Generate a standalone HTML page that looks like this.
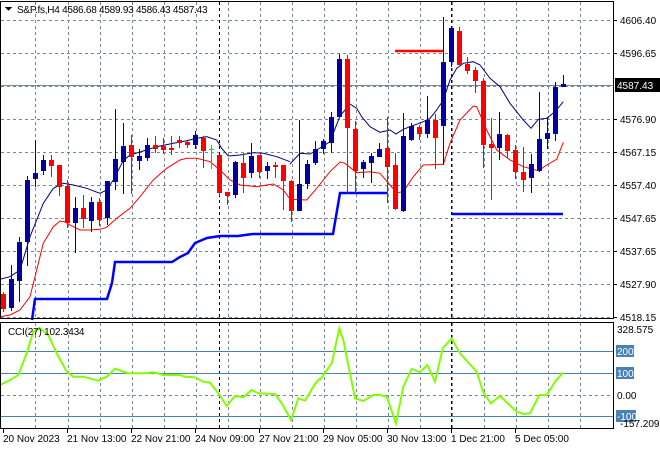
<!DOCTYPE html>
<html><head><meta charset="utf-8">
<style>
html,body{margin:0;padding:0;background:#fff;width:660px;height:450px;overflow:hidden}
svg{display:block}
text{font-family:"Liberation Sans",sans-serif;font-size:10px;fill:#000}
</style></head>
<body>
<svg id="s" width="660" height="450" viewBox="0 0 660 450" xmlns="http://www.w3.org/2000/svg" shape-rendering="crispEdges">
<g id="grid" stroke="#778899" stroke-width="1" stroke-dasharray="3,3" fill="none"></g>
<line x1="219.5" y1="2" x2="219.5" y2="318" stroke="#000" stroke-dasharray="3,3"/>
<line x1="451.5" y1="2" x2="451.5" y2="318" stroke="#000" stroke-dasharray="3,3"/>
<line x1="219.5" y1="323" x2="219.5" y2="428" stroke="#000" stroke-dasharray="3,3"/>
<line x1="451.5" y1="323" x2="451.5" y2="428" stroke="#000" stroke-dasharray="3,3"/>
<g stroke="#4682b4" stroke-width="1">
<line x1="1" y1="351.5" x2="613" y2="351.5"/>
<line x1="1" y1="373.5" x2="613" y2="373.5"/>
<line x1="1" y1="416.5" x2="613" y2="416.5"/>
</g>
<line x1="1" y1="85.5" x2="613" y2="85.5" stroke="#778899"/>
<g id="ind" fill="none" shape-rendering="auto"></g>
<g id="cdl"></g>
<rect x="0.5" y="1.5" width="613" height="317" fill="none" stroke="#000"/>
<rect x="0.5" y="322.5" width="613" height="106" fill="none" stroke="#000"/>
<polygon points="5,7 12,7 8.5,11" fill="#000"/>
<text x="17" y="13" style="letter-spacing:-0.25px">S&amp;P.fs,H4  4586.68 4589.93 4586.43 4587.43</text>
<text x="8" y="335" style="letter-spacing:-0.2px">CCI(27) 102.3434</text>
<g id="pax"></g>
<rect x="615" y="78" width="45" height="14" fill="#000"/>
<text x="617" y="89" style="fill:#fff">4587.43</text>
<text x="617" y="333">328.575</text>
<rect x="616" y="345" width="18" height="12" fill="#4682b4"/><text x="617" y="355" style="fill:#fff">200</text>
<rect x="616" y="367" width="18" height="12" fill="#4682b4"/><text x="617" y="377" style="fill:#fff">100</text>
<text x="617" y="399">0.00</text>
<rect x="616" y="410" width="20" height="12" fill="#4682b4"/><text x="617" y="420" style="fill:#fff">-100</text>
<text x="620" y="427">-157.2095</text>
<g id="tax"></g>
</svg>
<script>
var NS="http://www.w3.org/2000/svg";
function el(p,t,a){var e=document.createElementNS(NS,t);for(var k in a)e.setAttribute(k,a[k]);p.appendChild(e);return e;}
var g=document.getElementById('grid');
var vx=[35,68,100,132,164,196,228,260,292,324,356,388,420,452,484,516,548,580];
vx.forEach(function(x){el(g,'line',{x1:x+.5,y1:2,x2:x+.5,y2:318});el(g,'line',{x1:x+.5,y1:323,x2:x+.5,y2:428});});
var hy=[20,53,86,119,152,185,218,251,284,317];
hy.forEach(function(y){el(g,'line',{x1:1,y1:y+.5,x2:613,y2:y+.5});});
el(g,'line',{x1:1,y1:395.5,x2:613,y2:395.5});
var pax=document.getElementById('pax');
var pl=["4606.40","4596.65","4587.43","4576.90","4567.15","4557.40","4547.65","4537.65","4527.90","4518.15"];
var py=[20,53,0,119,152,185,218,251,284,317];
pl.forEach(function(t,i){if(!py[i])return;el(pax,'line',{x1:613,y1:py[i]+.5,x2:617,y2:py[i]+.5,stroke:'#000'});var e=el(pax,'text',{x:620,y:py[i]+4});e.textContent=t;});
var tax=document.getElementById('tax');
[["20 Nov 2023",3],["21 Nov 13:00",67],["22 Nov 21:00",131],["24 Nov 09:00",195],["27 Nov 21:00",259],["29 Nov 05:00",323],["30 Nov 13:00",387],["1 Dec 21:00",451],["5 Dec 05:00",515]].forEach(function(a){
el(tax,'line',{x1:a[1]+.5,y1:429,x2:a[1]+.5,y2:433,stroke:'#000'});var e=el(tax,'text',{x:a[1],y:442});e.textContent=a[0];});
var C=[
['r',294,309,292,312],['b',279,308,265,311],['b',242,281,237,302],['b',180,242,176,266],['b',173,179,140,187],
['b',160,171,155,175],['r',160,166,155,177],['r',165,187,165,196],['r',186,223,180,228],['b',208,223,197,253],
['r',208,219,195,228],['b',202,221,197,232],['r',202,220,198,226],['b',181,218,181,225],['b',159,182,109,190],
['b',146,162,123,194],['r',145,157,135,194],['b',156,161,149,170],['b',145,158,138,161],['r',145,149,136,153],
['r',146,150,138,154],['r',148,150,136,155],['r',140,143,136,148],['r',142,145,141,148],['b',135,145,131,149],
['r',138,151,136,168],['g',149,149,145,169],['r',155,193,155,196],['r',192,196,192,205],['b',162,195,161,198],
['r',163,178,153,193],['b',156,173,143,178],['r',155,172,155,178],['b',166,171,162,179],['r',165,167,162,178],
['r',165,181,165,210],['r',181,211,180,222],['b',184,211,120,211],['b',164,184,160,189],['b',149,163,141,165],
['b',141,149,139,154],['b',117,143,112,153],['b',59,117,54,117],['r',59,128,55,193],['r',129,171,121,193],
['b',162,169,160,178],['b',156,163,153,183],['b',149,157,143,157],['r',148,167,117,203],['r',165,209,153,210],
['b',136,211,113,212],['b',126,140,123,141],['r',127,134,125,140],['b',120,134,96,138],['r',120,138,114,169],
['b',62,126,17,165],['b',28,62,27,67],['r',31,65,27,65],['r',64,71,57,74],['r',70,81,67,93],
['r',81,145,78,168],['r',144,148,118,200],['b',134,148,112,160],['r',135,151,134,158],['r',150,172,145,179],
['r',172,180,147,192],['b',164,178,154,193],['b',139,171,92,172],['b',133,139,117,149],['b',87,134,82,141],
['b',84,87,75,87]];
var cg=document.getElementById('cdl');
var col={r:'#ff0000',b:'#0000a0',g:'#00dd00'};
C.forEach(function(c,i){var x=3+8*i;var f=col[c[0]];
el(cg,'rect',{x:x,y:c[3],width:1,height:Math.max(1,c[4]-c[3]),fill:f});
var h=Math.max(1,c[2]-c[1]);
if(c[0]=='g')el(cg,'rect',{x:x-2,y:c[1],width:5,height:1,fill:f});
else el(cg,'rect',{x:x-2,y:c[1],width:5,height:h,fill:f});});
var ind=document.getElementById('ind');
function poly(pts,ox,oy,stroke,w){var s=pts.map(function(p){return (ox+p[0]/3).toFixed(1)+','+(oy+p[1]/3).toFixed(1)}).join(' ');el(ind,'polyline',{points:s,stroke:stroke,'stroke-width':w,fill:'none'});}
poly([[0,568],[30,560],[60,540],[90,440],[130,340],[160,295],[190,280],[220,285],[260,295],[300,310],[320,300],[340,270],[370,212],[390,195],[430,183],[470,170],[520,160],[560,152],[590,145],[620,140],[650,150],[665,175],[685,198],[720,195],[760,188],[790,190],[830,200],[870,215]],0,90,'#000080',1);
poly([[0,462],[30,430],[60,432],[100,408],[120,395],[150,318],[180,282],[200,295],[215,320],[240,350],[270,367],[300,360],[318,372],[340,358],[360,350],[400,335],[420,325],[440,300],[460,270],[480,210],[500,175],[520,160],[550,155],[570,165],[600,205],[630,230],[660,280],[700,330],[723,355],[745,328],[770,325],[795,305],[820,275]],290,10,'#000080',1);
poly([[0,680],[30,675],[60,660],[90,620],[110,540],[130,460],[160,410],[180,393],[195,395],[210,405],[240,420],[270,420],[300,418],[320,412],[350,385],[390,355],[420,320],[460,270],[500,235],[540,210],[560,205],[590,205],[630,215],[660,240],[690,270],[720,285],[770,290],[800,285],[820,282],[850,300],[870,327]],0,90,'#ff0000',1);
poly([[0,568],[50,570],[80,535],[120,485],[150,456],[165,460],[200,488],[240,485],[270,490],[300,525],[320,548],[340,545],[370,500],[400,465],[460,463],[480,400],[510,330],[550,288],[560,290],[590,360],[620,420],[660,450],[700,470],[745,482],[770,465],[800,448],[820,397]],290,10,'#ff0000',1);
el(ind,'polyline',{points:'32,320 35,299 107,299 112,283 115,262 172,262 180,257 188,253 195,243 207,238 220,236 238,236 245,235 253,234 333,234 340,193 387,193',stroke:'#0000ff','stroke-width':2.5,fill:'none'});
el(ind,'line',{x1:395,y1:51,x2:443,y2:51,stroke:'#ff0000','stroke-width':2.5});
el(ind,'line',{x1:452,y1:214,x2:563,y2:214,stroke:'#0000ff','stroke-width':2.5});
poly([[0,225],[30,210],[55,195],[80,130],[100,65],[120,55],[145,75],[170,130],[200,185],[220,200],[250,200],[295,212],[320,200],[345,176],[385,190],[440,190],[460,187],[490,195],[540,195],[555,200],[585,202],[610,215],[630,218],[655,250],[680,288],[705,258],[730,262],[755,240],[775,250],[825,252],[845,280],[873,330],[895,265],[915,272],[945,222],[960,205]],0,310,'#7fff00',2);
poly([[0,195],[35,145],[58,40],[70,75],[105,250],[130,258],[160,240],[180,240],[200,245],[228,325],[250,215],[275,162],[300,172],[322,150],[345,200],[368,100],[395,70],[420,115],[470,170],[490,232],[512,265],[540,243],[590,290],[610,297],[630,295],[658,240],[680,240],[705,200],[730,172]],320,315,'#7fff00',2);
</script>
</body></html>
